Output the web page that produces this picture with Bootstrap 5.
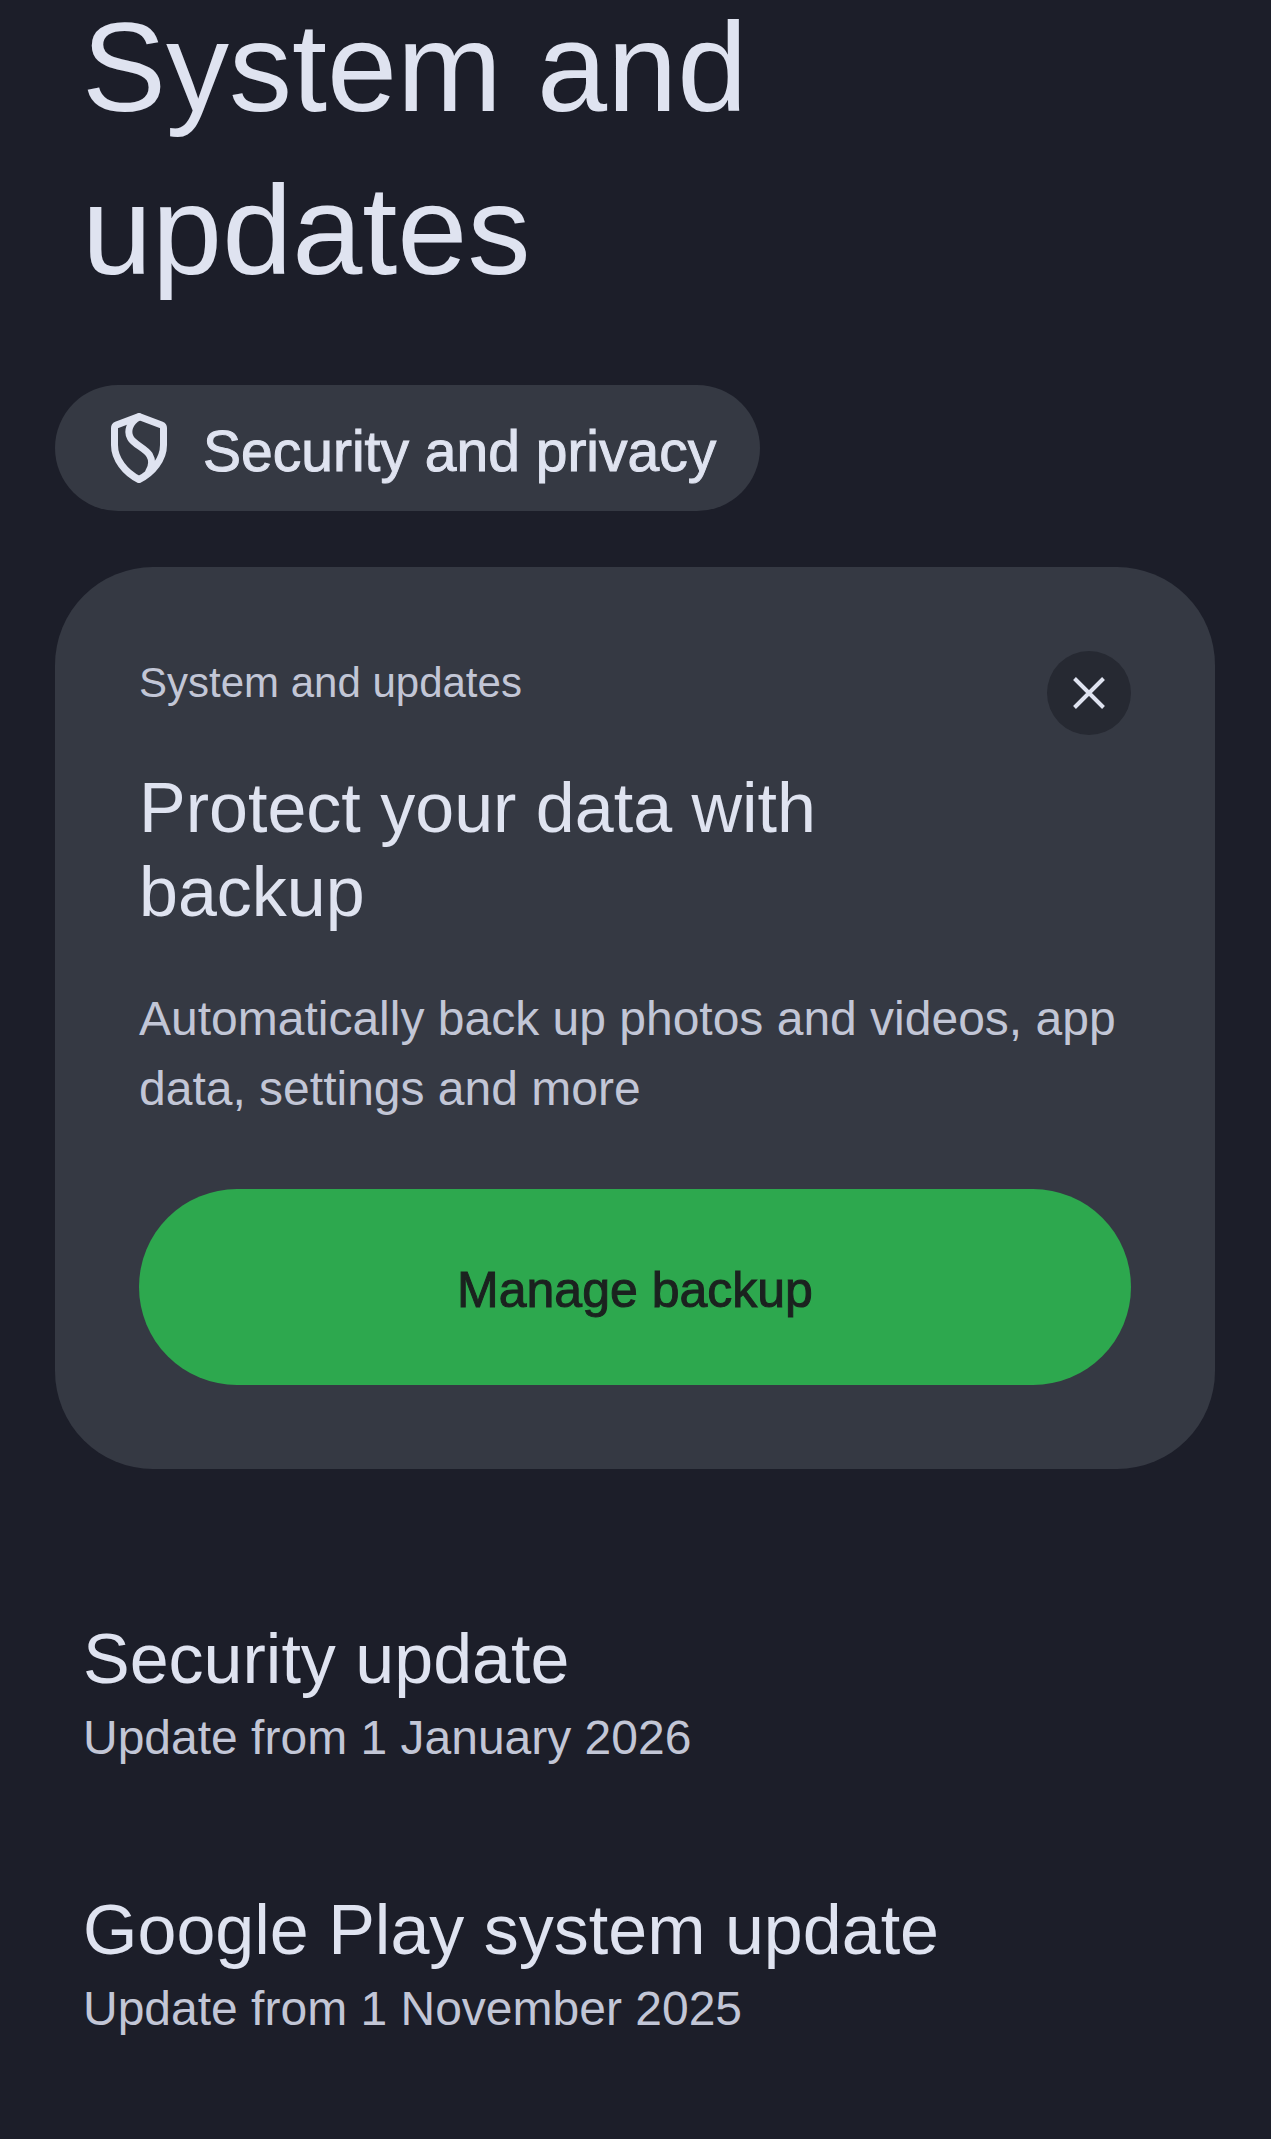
<!DOCTYPE html>
<html lang="en">
<head>
<meta charset="utf-8">
<meta name="viewport" content="width=device-width, initial-scale=1">
<title>System and updates</title>
<link href="https://cdn.jsdelivr.net/npm/bootstrap@5.3.0/dist/css/bootstrap.min.css" rel="stylesheet">
<style>
  body { background: #1c1e29; color: #dfe3f0; font-family: "Liberation Sans", Arial, sans-serif; overflow-x: hidden; }
  .settings-page { padding: 0 56px 0 55px; }
  .page-title { font-size: 126px; line-height: 163px; font-weight: 400; margin: -14px 0 73px; padding-left: 27px; max-width: 840px; }
  .topic-chip { background: #353943; color: #dfe3f0; font-size: 57px; line-height: 66px; padding: 33px 44px 27px 56px; gap: 36px; border: 0; -webkit-text-stroke: 1px currentColor; }
  .topic-chip:hover { background: #40434e; color: #dfe3f0; }
  .topic-chip svg { width: 56px; height: 70px; margin: -6px 0 0; }
  .tip-card { background: #353943; color: #dfe3f0; border-radius: 98px; padding: 84px; margin-top: 56px; }
  .tip-label { font-size: 42px; line-height: 64px; color: #c2c6d6; }
  .close-btn { width: 84px; height: 84px; background: #262932; }
  .close-btn:hover { background: #1c1e29; }
  .heading-text { font-size: 70px; line-height: 84px; font-weight: 400; margin: 0; }
  .tip-card .heading-text { margin-top: 31px; max-width: 800px; }
  .support-text { font-size: 48px; line-height: 70px; color: #c2c6d6; margin: 0; }
  .tip-card .support-text { margin: 50px 0 65px; }
  .main-action { background: #2da84e; color: #1b221f; font-size: 50px; line-height: 70px; padding: 66px 40px 60px; border: 0; -webkit-text-stroke: 1px currentColor; }
  .main-action:hover { background: #279645; color: #1b221f; }
  .update-list { padding: 148px 0 112px 28px; gap: 115px; }
  .update-row { color: #dfe3f0; gap: 2px; }
</style>
<script src="https://cdn.jsdelivr.net/npm/bootstrap@5.3.0/dist/js/bootstrap.bundle.min.js" defer></script>
</head>
<body>
<main class="settings-page container-fluid">
  <h1 class="page-title">System and updates</h1>

  <a href="#security" class="topic-chip btn rounded-pill d-inline-flex align-items-center">
    <svg viewBox="0 0 56 70" fill="none" stroke="currentColor" stroke-width="7" stroke-linejoin="round" stroke-linecap="round" aria-hidden="true">
      <path d="M28 3.500 50.500 12q2 .8 2 3V32C52.500 46 42 59.500 28 66.500 14 59.500 3.500 46 3.500 32V15q0-2.200 2-3Z"/>
      <path d="M28 4C18 9 16 19 19.500 25 23 31.500 34 35 38.500 42 42 48 41 53 38 58"/>
    </svg>
    <span>Security and privacy</span>
  </a>

  <section class="tip-card card border-0">
    <div class="d-flex justify-content-between align-items-start">
      <span class="tip-label">System and updates</span>
      <button type="button" class="close-btn btn rounded-circle border-0 p-0 d-flex align-items-center justify-content-center" aria-label="Dismiss">
        <svg width="32" height="32" viewBox="0 0 32 32" stroke="#dfe3f0" stroke-width="4" aria-hidden="true"><path d="M1.500 1.500l29 29M30.500 1.500l-29 29"/></svg>
      </button>
    </div>
    <h2 class="heading-text">Protect your data with backup</h2>
    <p class="support-text">Automatically back up photos and videos, app data, settings and more</p>
    <button type="button" class="main-action btn rounded-pill w-100">Manage backup</button>
  </section>

  <div class="update-list d-flex flex-column">
    <a href="#security-update" class="update-row d-flex flex-column text-decoration-none">
      <span class="heading-text">Security update</span>
      <span class="support-text">Update from 1 January 2026</span>
    </a>
    <a href="#play-update" class="update-row d-flex flex-column text-decoration-none">
      <span class="heading-text">Google Play system update</span>
      <span class="support-text">Update from 1 November 2025</span>
    </a>
  </div>
</main>
</body>
</html>
